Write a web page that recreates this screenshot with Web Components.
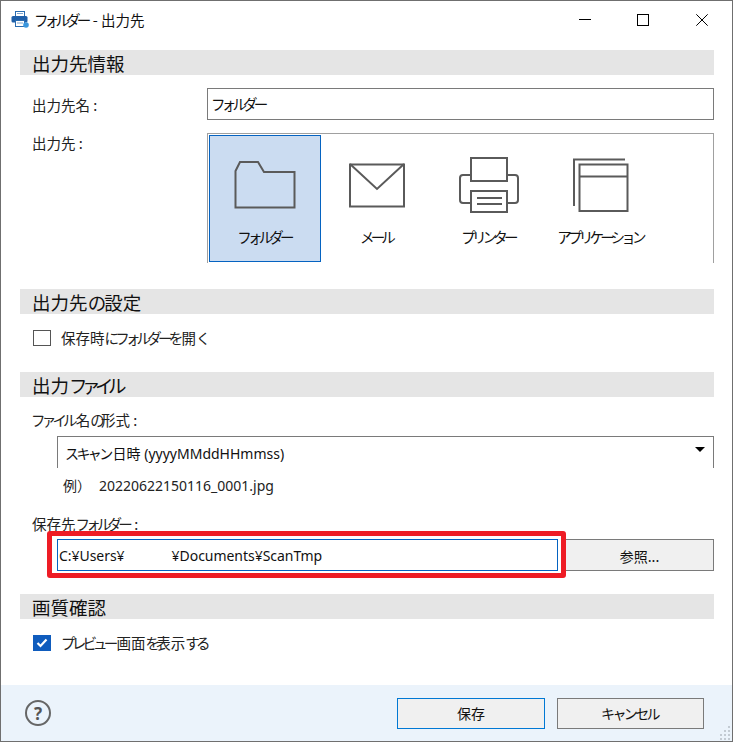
<!DOCTYPE html>
<html lang="ja">
<head>
<meta charset="utf-8">
<title>フォルダー - 出力先</title>
<style>
  html, body { margin: 0; background: #fff; }
  body { font-family: "Noto Sans CJK JP", "Noto Sans", sans-serif; font-size: 14px; color: #1a1a1a; }
</style>
</head>
<body>
<scan-window>
  <title-bar slot="top"><kana-run tight>フォルダー</kana-run> - 出力先</title-bar>

  <section-head style="margin-top:10px">出力先情報</section-head>
  <form-row style="margin-top:13px">
    <span slot="label">出力先名 :</span>
    <text-box><kana-run tight>フォルダー</kana-run></text-box>
  </form-row>
  <dest-picker style="margin-top:13px"></dest-picker>

  <section-head style="margin-top:26px">出力先<kana-run style="letter-spacing:-4px">の</kana-run>設定</section-head>
  <check-row style="margin-top:15px">保存時<kana-run tight>にフォルダーを</kana-run>開<kana-run tight>く</kana-run></check-row>

  <section-head style="margin-top:25px">出力<kana-run style="letter-spacing:-5.5px">ファイル</kana-run></section-head>
  <field-label style="margin-top:13px"><kana-run tight style="margin-left:-1px">ファイル</kana-run>名<kana-run tight style="margin-right:0">の</kana-run>形式 :</field-label>
  <combo-box style="margin-top:6px"><kana-run>スキャン</kana-run>日時 (yyyyMMddHHmmss)</combo-box>
  <example-line>20220622150116_0001.jpg</example-line>
  <field-label style="margin-top:19px">保存先<kana-run tight>フォルダー</kana-run> :</field-label>
  <folder-row style="margin-top:5px">C:¥Users¥<span style="display:inline-block;width:47px"></span>¥Documents¥ScanTmp</folder-row>

  <section-head style="margin-top:23px">画質確認</section-head>
  <check-row checked style="margin-top:15px"><kana-run tight>プレビュー</kana-run>画面<kana-run tight style="margin-right:0">を</kana-run>表示<kana-run tight style="margin-right:0">する</kana-run></check-row>

  <dialog-footer slot="bottom"></dialog-footer>
</scan-window>

<script>
const FONT = '"Noto Sans CJK JP", "Noto Sans", sans-serif';
const LATIN = '"Noto Sans", "Noto Sans CJK JP", sans-serif';

// Small helper, every element only differs by its markup
function define(name, html) {
  const template = document.createElement('template');
  template.innerHTML = html;
  customElements.define(name, class extends HTMLElement {
    constructor() {
      super();
      const shadowRoot = this.attachShadow({ mode: 'open' });
      shadowRoot.appendChild(template.content.cloneNode(true));
    }
  });
}

// Kana in the original font is much narrower than in Noto
define('kana-run', `
  <style>
    :host { display: inline; letter-spacing: -2.6px; margin-right: 2px; }
    :host([tight]) { letter-spacing: -3.8px; margin-right: 2px; }
  </style>
  <slot></slot>`);

define('scan-window', `
  <style>
    :host {
      display: flex; flex-direction: column; box-sizing: border-box;
      width: 733px; height: 742px; border: 1px solid #6f6f6f; background: #fff;
      font-family: ${FONT}; position: relative;
    }
    .body { flex: 1; padding: 0 18px 0 19px; display: flex; flex-direction: column; }
  </style>
  <slot name="top"></slot>
  <div class="body"><slot></slot></div>
  <slot name="bottom"></slot>`);

define('title-bar', `
  <style>
    :host { display: flex; align-items: flex-start; height: 39px; flex: none; font-size: 14.5px; color: #111; }
    .icon { width: 18px; height: 17px; margin: 10px 5px 0 10px; flex: none; }
    .text { flex: 1; white-space: nowrap; line-height: 20px; padding-top: 9px; }
    .ctl { width: 58.5px; height: 37px; display: flex; align-items: center; justify-content: center; }
    .ctl svg { display: block; }
    .ctls { display: flex; margin-right: 1px; }
  </style>
  <svg class="icon" viewBox="0 0 18 17">
    <rect x="4.5" y="0.5" width="9" height="5" fill="#fff" stroke="#2a6cb0"/>
    <rect x="6" y="2" width="6" height="1" fill="#7fa6cf"/>
    <rect x="0.5" y="5" width="16" height="6.5" rx="1.5" fill="#1f5fa8"/>
    <rect x="4.5" y="9.5" width="9" height="6" fill="#fff" stroke="#2a6cb0"/>
    <rect x="6" y="11.5" width="6" height="1" fill="#7fa6cf"/>
    <circle cx="15" cy="14" r="2.8" fill="#3a96dd"/>
  </svg>
  <div class="text"><slot></slot></div>
  <div class="ctls">
    <div class="ctl"><svg width="12" height="12"><rect x="0" y="5" width="12" height="1" fill="#000"/></svg></div>
    <div class="ctl"><svg width="12" height="12"><rect x="0.5" y="0.5" width="11" height="11" fill="none" stroke="#000"/></svg></div>
    <div class="ctl"><svg width="12" height="12"><path d="M0.3 0.3L11.7 11.7M11.7 0.3L0.3 11.7" stroke="#000" fill="none"/></svg></div>
  </div>`);

define('section-head', `
  <style>
    :host {
      display: flex; align-items: center; height: 25px; flex: none; box-sizing: border-box;
      background: #e5e5e5; padding-left: 12px; font-size: 18.5px; color: #111; white-space: nowrap;
    }
    .text { display: block; }
  </style>
  <span class="text"><slot></slot></span>`);

define('field-label', `
  <style>:host { display: block; padding-left: 12px; font-size: 14.5px; line-height: 20px; color: #222; white-space: nowrap; }</style>
  <slot></slot>`);

define('form-row', `
  <style>
    :host { display: flex; align-items: center; padding-left: 12px; height: 32px; flex: none; color: #222; }
    .label { width: 175px; flex: none; font-size: 14.5px; }
    .ctl { flex: 1; }
  </style>
  <div class="label"><slot name="label"></slot></div>
  <div class="ctl"><slot></slot></div>`);

define('text-box', `
  <style>
    :host {
      display: flex; align-items: center; box-sizing: border-box; height: 32px; padding-left: 3px;
      border: 1px solid #7a7a7a; background: #fff; font-size: 14.5px; color: #111; padding-bottom: 1px;
    }
  </style>
  <slot></slot>`);

define('dest-tile', `
  <style>
    :host {
      display: flex; flex-direction: column; align-items: center; box-sizing: border-box;
      width: 112px; height: 127px; padding-top: 18px; font-size: 14.5px; color: #111; white-space: nowrap;
    }
    :host([selected]) { background: #cbdcf1; box-shadow: inset 0 0 0 1px #0563c1; }
    .icon { height: 64px; }
    .name { margin-top: 10px; line-height: 20px; }
    ::slotted(svg) { display: block; }
  </style>
  <div class="icon"><slot name="icon"></slot></div>
  <div class="name"><slot></slot></div>`);

const ICON = 'width="64" height="64" viewBox="0 0 64 64" fill="none" stroke="#5a5a5a" stroke-width="2"';

define('dest-picker', `
  <style>
    :host { display: block; padding-left: 12px; flex: none; }
    .wrap { display: flex; align-items: stretch; color: #222; }
    .label { width: 175px; flex: none; font-size: 14.5px; line-height: 20px; }
    .panel {
      flex: 1; display: flex; box-sizing: border-box; height: 130px; padding: 1px 1px 0;
      border: 1px solid #a0a0a0; border-bottom: 0;
    }
  </style>
  <div class="wrap">
    <div class="label">出力先 :</div>
    <div class="panel">
      <dest-tile selected>
        <svg slot="icon" ${ICON}><path d="M2.5 54.5V18L7 9H25L31 19H61.5V54.5Z"/></svg>
        <kana-run tight>フォルダー</kana-run>
      </dest-tile>
      <dest-tile>
        <svg slot="icon" ${ICON}><path d="M5 11.5H59V53.5H5Z"/><path d="M5 11L32 36L59 11"/></svg>
        <kana-run tight>メール</kana-run>
      </dest-tile>
      <dest-tile>
        <svg slot="icon" ${ICON}>
          <rect x="14" y="5" width="36" height="23"/>
          <path d="M14 50H6a3 3 0 0 1-3-3V25a3 3 0 0 1 3-3H14M50 22H58a3 3 0 0 1 3 3V47a3 3 0 0 1-3 3H50"/>
          <rect x="14" y="38" width="36" height="21"/>
          <path d="M20 45H45M20 51H45"/>
        </svg>
        <kana-run tight>プリンター</kana-run>
      </dest-tile>
      <dest-tile>
        <svg slot="icon" ${ICON}>
          <path d="M56 6.5H5V53"/>
          <rect x="10.5" y="11.5" width="48" height="46.5"/>
          <path d="M10.5 23.5H58.5"/>
        </svg>
        <kana-run tight>アプリケーション</kana-run>
      </dest-tile>
    </div>
  </div>`);

define('check-row', `
  <style>
    :host { display: flex; align-items: center; height: 18px; padding-left: 13px; font-size: 14.5px; color: #222; white-space: nowrap; flex: none; }
    .box { width: 18px; height: 16px; box-sizing: border-box; border: 1px solid #555; margin-right: 10px; flex: none; background: #fff; display: flex; }
    :host([checked]) .box { background: #0f5cbd; border-color: #0f5cbd; }
    .text { margin-top: -2px; }
    svg { display: none; }
    :host([checked]) svg { display: block; margin: auto; }
  </style>
  <div class="box"><svg width="12" height="10" viewBox="0 0 12 10"><path d="M1.5 5L4.5 8L10.5 1.5" fill="none" stroke="#fff" stroke-width="2.2"/></svg></div>
  <span class="text"><slot></slot></span>`);

define('combo-box', `
  <style>
    :host {
      display: flex; align-items: center; margin-left: 37px; height: 32px; flex: none; box-sizing: border-box;
      border: 1px solid #7a7a7a; border-bottom: 0; padding: 1px 8px 0 7px;
      font-size: 14px; color: #111; font-family: ${LATIN}; white-space: nowrap;
    }
    .text { flex: 1; }
    .arrow { width: 0; height: 0; border: 5px solid transparent; border-top: 5px solid #000; border-bottom: 0; margin-bottom: 8px; }
  </style>
  <div class="text"><slot></slot></div>
  <div class="arrow"></div>`);

define('example-line', `
  <style>
    :host { display: flex; padding-left: 43px; height: 20px; line-height: 20px; margin-top: 7px; font-size: 14px; color: #222; font-family: ${LATIN}; flex: none; position: relative; top: 1px; }
    .tag { width: 36px; flex: none; }
  </style>
  <div class="tag">例）</div>
  <slot></slot>`);

define('folder-row', `
  <style>
    :host { display: flex; height: 32px; margin-left: 37px; position: relative; flex: none; }
    .path {
      flex: 1; display: flex; align-items: center; box-sizing: border-box; padding: 1px 0 0 1px;
      border: 1px solid #0563c1; font-size: 14px; letter-spacing: -0.04px; color: #111; font-family: ${LATIN}; white-space: nowrap;
    }
    .browse {
      width: 148px; flex: none; margin-left: 8px; display: flex; align-items: center; justify-content: center; box-sizing: border-box;
      border: 1px solid #7a7a7a; border-left: 0; background: #f0f0f0; font-size: 14px; color: #111; padding-top: 1px;
    }
    /* red annotation drawn over the screenshot */
    .mark {
      position: absolute; left: -10px; top: -8px; width: 519px; height: 47px; box-sizing: border-box;
      border: 5px solid #ee1c25; border-radius: 3px;
    }
  </style>
  <div class="path"><span><slot></slot></span></div>
  <div class="browse">参照...</div>
  <div class="mark"></div>`);

define('dialog-footer', `
  <style>
    :host {
      display: flex; align-items: center; height: 56px; flex: none; box-sizing: border-box; position: relative;
      background: #ebf3fb; padding: 0 28px 0 24px; gap: 12px; font-size: 14px; color: #111;
    }
    .help {
      width: 26px; height: 26px; box-sizing: border-box; border: 2px solid #666; border-radius: 50%;
      display: flex; align-items: center; justify-content: center; margin-right: auto;
      font: bold 17px ${LATIN}; color: #555;
    }
    .btn {
      width: 148px; height: 31px; box-sizing: border-box; border: 1px solid #7a7a7a; background: #f0f0f0;
      display: flex; align-items: center; justify-content: center;
    }
    .btn.primary { border-color: #0078d4; }
    .btn.last { width: 147px; }
    .grip { position: absolute; right: 1px; bottom: 1px; }
  </style>
  <div class="help">?</div>
  <div class="btn primary">保存</div>
  <div class="btn last"><kana-run>キャンセル</kana-run></div>
  <svg class="grip" width="14" height="15" fill="#c3cbd3">
    <rect x="11" y="1" width="2" height="2"/><rect x="11" y="5" width="2" height="2"/><rect x="11" y="9" width="2" height="2"/><rect x="11" y="13" width="2" height="2"/>
    <rect x="7" y="5" width="2" height="2"/><rect x="7" y="9" width="2" height="2"/><rect x="7" y="13" width="2" height="2"/>
    <rect x="3" y="9" width="2" height="2"/><rect x="3" y="13" width="2" height="2"/>
  </svg>`);
</script>
</body>
</html>
